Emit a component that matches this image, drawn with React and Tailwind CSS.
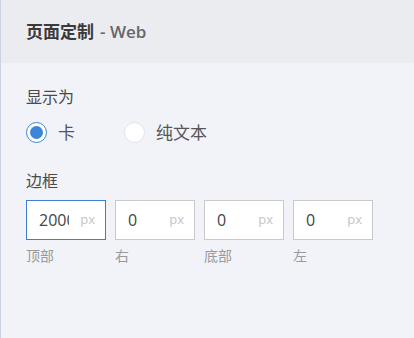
import React, { useState } from 'react';

const font = { fontFamily: '"Open Sans", "Noto Sans CJK SC", sans-serif' };

const Radio = ({ checked, label, onClick }) => (
    <button onClick={onClick} className="flex items-center gap-[11px] text-[17px] text-[#555]">
        <span
            className={`w-[21px] h-[21px] rounded-full bg-white flex items-center justify-center border ${checked ? 'border-[#3b86d8]' : 'border-[#dfe3ea]'}`}
        >
            {checked && <span className="w-[13px] h-[13px] rounded-full bg-[#3b86d8]" />}
        </span>
        <span>{label}</span>
    </button>
);

const SideInput = ({ value, label, active }) => (
    <div className="flex flex-col">
        <div
            className={`w-[80px] h-[40px] bg-white flex items-center pl-[12px] pr-[10px] border ${active ? 'border-[#3b7fd0]' : 'border-[#c9c9cc]'}`}
        >
            <span className="w-[30px] overflow-hidden whitespace-nowrap text-[16px] text-[#444]">{value}</span>
            <span className="ml-auto text-[13px] text-[#c4c4c8]">px</span>
        </div>
        <span className="mt-[5px] text-[14px] text-[#9a9a9e]">{label}</span>
    </div>
);

export default function App() {
    const [mode, setMode] = useState('card');
    const sides = [
        { id: 'top', label: '顶部', value: '2000' },
        { id: 'right', label: '右', value: '0' },
        { id: 'bottom', label: '底部', value: '0' },
        { id: 'left', label: '左', value: '0' },
    ];

    return (
        <div className="w-[414px] h-[338px] bg-[#f1f3f8] border-l border-[#c9d1e3] overflow-hidden" style={font}>
            {/* Header */}
            <div className="h-[63px] bg-[#ebecf0] flex items-center pl-[25px]">
                <span className="text-[17px] font-bold text-[#3a3a3a]">页面定制</span>
                <span className="text-[17px] font-semibold text-[#66666b] ml-[6px]">- Web</span>
            </div>

            <div className="pl-[25px] pt-[22px]">
                <div className="text-[16px] text-[#4a4a4a]">显示为</div>
                <div className="flex items-center gap-[49px] mt-[11px]">
                    <Radio checked={mode === 'card'} label="卡" onClick={() => setMode('card')} />
                    <Radio checked={mode === 'text'} label="纯文本" onClick={() => setMode('text')} />
                </div>

                <div className="text-[16px] text-[#4a4a4a] mt-[23px]">边框</div>
                <div className="flex gap-[9px] mt-[7px]">
                    {sides.map((s, i) => (
                        <SideInput key={s.id} value={s.value} label={s.label} active={i === 0} />
                    ))}
                </div>
            </div>
        </div>
    );
}
